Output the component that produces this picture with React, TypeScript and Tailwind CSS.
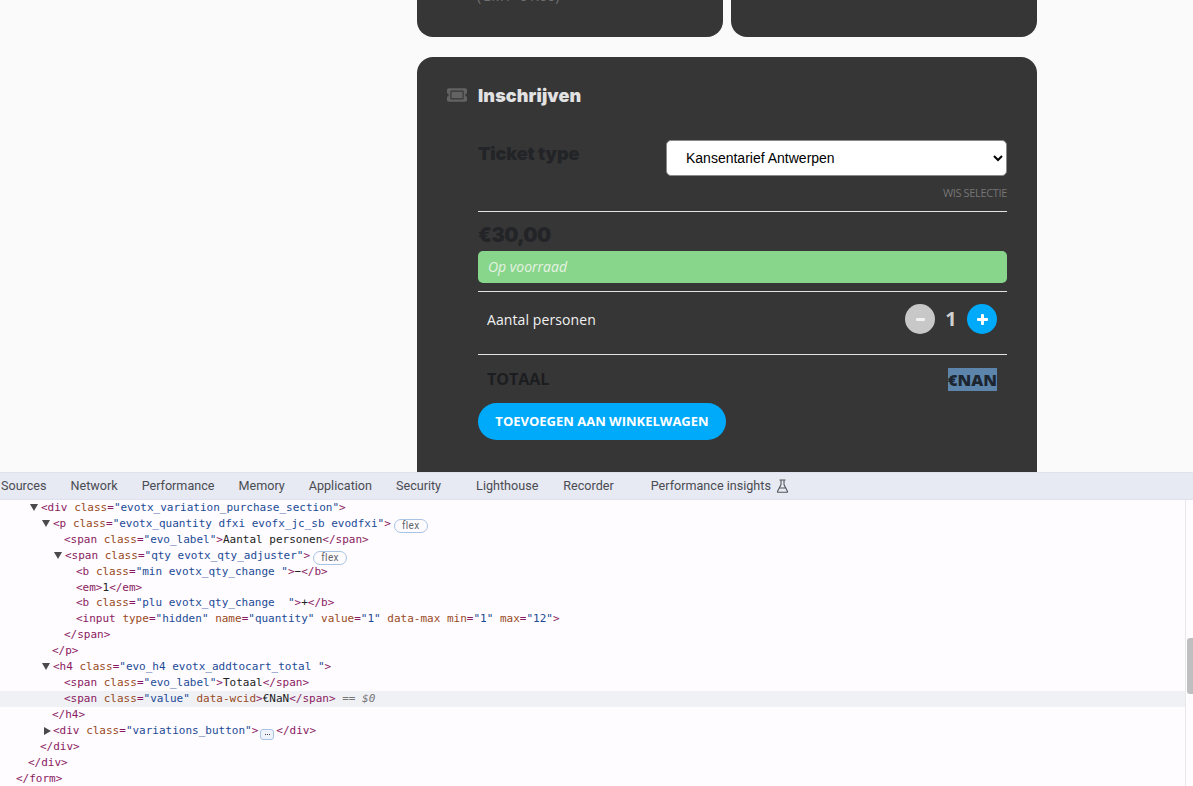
import { FaTicketAlt } from "react-icons/fa";

const heading = "font-['Inter',sans-serif]";
const body = "font-['Open_Sans',sans-serif]";

function T({ children }: { children: React.ReactNode }) {
  return <span className="text-[#8a1a60]">{children}</span>;
}
function A({ name, value }: { name: string; value: string }) {
  return (
    <>
      {" "}
      <span className="text-[#994a1e]">{name}</span>
      <T>=</T>
      <span className="text-[#1c4a96]">"{value}"</span>
    </>
  );
}
function Flex() {
  return (
    <span className="ml-[3px] inline-flex h-[14px] w-[34px] items-center justify-center rounded-full border border-[#a8c3e4] align-[-2px] font-['Roboto',sans-serif] text-[10px] leading-none tracking-[0.4px] text-[#5f6368]">
      flex
    </span>
  );
}
function Row({
  indent,
  arrow,
  selected,
  short,
  children,
}: {
  indent: number;
  arrow?: "open" | "closed";
  selected?: boolean;
  short?: boolean;
  children: React.ReactNode;
}) {
  return (
    <div
      className={`relative whitespace-pre ${short ? "h-[15px] leading-[15px]" : "h-4 leading-4"} ${selected ? "bg-[#eff1f5]" : ""}`}
      style={{ paddingLeft: indent }}
    >
      {arrow === "open" && (
        <span className="absolute top-[4px] h-0 w-0 border-x-[4px] border-t-[7px] border-x-transparent border-t-[#4a4a4a]" style={{ left: indent - 11 }} />
      )}
      {arrow === "closed" && (
        <span className="absolute top-[4px] h-0 w-0 border-y-[4px] border-l-[7px] border-y-transparent border-l-[#4a4a4a]" style={{ left: indent - 9 }} />
      )}
      {children}
    </div>
  );
}

function Divider() {
  return <div className="h-px bg-[#e4e4e4]" />;
}

const tabs = [
  { label: "Sources", cls: "" },
  { label: "Network", cls: "" },
  { label: "Performance", cls: "" },
  { label: "Memory", cls: "" },
  { label: "Application", cls: "" },
  { label: "Security", cls: "" },
  { label: "Lighthouse", cls: "ml-[11px]" },
  { label: "Recorder", cls: "ml-px" },
];

export default function App() {
  return (
    <div className="flex h-[786px] w-[1193px] flex-col overflow-hidden bg-[#fafafa]">
      <div className="h-[472px] shrink-0 overflow-hidden pl-[417px]">
        <div className="w-[620px]">
          <div className="flex gap-2">
            <div className={`h-[37px] w-[306px] overflow-hidden rounded-b-[16px] bg-[#363636] pl-[60px] ${body}`}>
              <div className="-mt-[13px] text-[14px] leading-[18px] text-[#6f6f6f]">(GMT+01:00)</div>
            </div>
            <div className="h-[37px] w-[306px] rounded-b-[16px] bg-[#363636]" />
          </div>

          <section className="mt-5 h-[430px] rounded-t-[16px] bg-[#363636] pr-[30px] pl-[30px] pt-[26px]">
            <div className="flex h-6 items-center">
              <FaTicketAlt className="h-[20px] w-[20px] text-[#636363]" />
              <h2 className={`ml-[11px] text-[18px] font-black tracking-[0.1px] text-[#e2e2e2] ${heading}`}>Inschrijven</h2>
            </div>

            <div className="ml-[31px]">
              <div className="mt-[33px] flex justify-between">
                <span className={`mt-[2px] text-[18px] leading-6 font-black tracking-[-0.1px] text-[#232427] ${heading}`}>Ticket type</span>
                <select
                  defaultValue="Kansentarief Antwerpen"
                  className="h-9 w-[341px] rounded-[5px] border border-[#8a8a8a] bg-white pl-[15px] font-['Liberation_Sans',sans-serif] text-[14px] text-black"
                >
                  <option>Kansentarief Antwerpen</option>
                </select>
              </div>
              <div className={`mt-[10px] text-right text-[11px] leading-[14px] tracking-[-0.35px] text-[#757575] ${body}`}>WIS SELECTIE</div>
              <div className="mt-[11px]"><Divider /></div>

              <div className={`mt-[10px] h-[26px] text-[20px] leading-[26px] font-black tracking-[-0.6px] text-[#232427] ${heading}`}>€30,00</div>
              <div className={`mt-[3px] h-8 rounded-[5px] bg-[#88d68b] pl-[10px] text-[14px] leading-[31px] text-[#e6f2e2] italic ${body}`}>Op voorraad</div>
              <div className="mt-2"><Divider /></div>

              <div className={`flex items-start justify-between pt-3 pr-[10px] pb-5 pl-[9px] ${body}`}>
                <span className="mt-[6px] text-[14px] leading-5 tracking-[0.1px] text-[#f1f1f1]">Aantal personen</span>
                <span className="flex h-[30px] items-center">
                  <b className="flex h-[30px] w-[30px] items-center justify-center rounded-full bg-[#c8c8c8] text-[#fafafa]">
                    <span className="h-[3px] w-[9px] rounded-[1px] bg-[#f2f2f2]" />
                  </b>
                  <em className="w-8 text-center text-[20px] font-bold text-[#cfcfcf] not-italic">1</em>
                  <b className="relative flex h-[30px] w-[30px] items-center justify-center rounded-full bg-[#00aafb]">
                    <span className="h-[3px] w-[11px] rounded-[1px] bg-white" />
                    <span className="absolute h-[11px] w-[3px] rounded-[1px] bg-white" />
                  </b>
                </span>
              </div>
              <Divider />

              <div className={`flex justify-between pt-[13px] pr-[10px] pl-[9px] text-[16px] leading-[23px] font-bold text-[#1c1d20] ${body}`}>
                <span>TOTAAL</span>
                <span className="bg-[#5d85ac] text-[16.5px] font-extrabold text-[#1c2530]">€NAN</span>
              </div>
              <button className={`mt-3 flex h-[37px] w-[248px] items-center justify-center rounded-full bg-[#00aafb] pt-px text-[13px] font-bold text-white ${body}`}>
                TOEVOEGEN AAN WINKELWAGEN
              </button>
            </div>
          </section>
        </div>
      </div>

      <div className="flex h-[28px] shrink-0 items-center gap-[24px] border-t border-b border-[#dfe1ee] bg-[#e7e9f3] pl-px font-['Roboto',sans-serif] text-[12.6px] text-[#4a4c52]">
        {tabs.map((t) => (
          <span key={t.label} className={t.cls}>{t.label}</span>
        ))}
        <span className="ml-[13px] flex items-center gap-[5px]">
          Performance insights
          <svg width="13" height="14" viewBox="0 0 13 14" fill="none" stroke="#55575c" strokeWidth="1.1">
            <path d="M3.5 1h6M5 1v4.5L1.5 12.5q-.2.8.6.8h8.8q.8 0 .6-.8L8 5.5V1M3.5 9h6" />
          </svg>
        </span>
      </div>

      <div className="flex min-h-0 flex-1 bg-[#fefcff]">
        <div className="min-w-0 flex-1 font-['DejaVu_Sans_Mono',monospace] text-[11px] text-[#222]">
          <Row indent={41} arrow="open"><T>&lt;div</T><A name="class" value="evotx_variation_purchase_section" /><T>&gt;</T></Row>
          <Row indent={53} arrow="open"><T>&lt;p</T><A name="class" value="evotx_quantity dfxi evofx_jc_sb evodfxi" /><T>&gt;</T><Flex /></Row>
          <Row indent={64}><T>&lt;span</T><A name="class" value="evo_label" /><T>&gt;</T>Aantal personen<T>&lt;/span&gt;</T></Row>
          <Row indent={65} arrow="open"><T>&lt;span</T><A name="class" value="qty evotx_qty_adjuster" /><T>&gt;</T><Flex /></Row>
          <Row indent={76}><T>&lt;b</T><A name="class" value="min evotx_qty_change " /><T>&gt;</T>−<T>&lt;/b&gt;</T></Row>
          <Row indent={76} short><T>&lt;em&gt;</T>1<T>&lt;/em&gt;</T></Row>
          <Row indent={76}><T>&lt;b</T><A name="class" value="plu evotx_qty_change  " /><T>&gt;</T>+<T>&lt;/b&gt;</T></Row>
          <Row indent={76}>
            <T>&lt;input</T><A name="type" value="hidden" /><A name="name" value="quantity" /><A name="value" value="1" />
            {" "}<span className="text-[#994a1e]">data-max</span><A name="min" value="1" /><A name="max" value="12" /><T>&gt;</T>
          </Row>
          <Row indent={64}><T>&lt;/span&gt;</T></Row>
          <Row indent={52}><T>&lt;/p&gt;</T></Row>
          <Row indent={53} arrow="open"><T>&lt;h4</T><A name="class" value="evo_h4 evotx_addtocart_total " /><T>&gt;</T></Row>
          <Row indent={64}><T>&lt;span</T><A name="class" value="evo_label" /><T>&gt;</T>Totaal<T>&lt;/span&gt;</T></Row>
          <Row indent={64} selected>
            <T>&lt;span</T><A name="class" value="value" />{" "}<span className="text-[#994a1e]">data-wcid</span><T>&gt;</T>€NaN<T>&lt;/span&gt;</T>
            <span className="text-[#777]"> == <em>$0</em></span>
          </Row>
          <Row indent={52}><T>&lt;/h4&gt;</T></Row>
          <Row indent={53} arrow="closed">
            <T>&lt;div</T><A name="class" value="variations_button" /><T>&gt;</T>
            <span className="mx-[2px] inline-flex h-[11px] w-[14px] items-center justify-center gap-px rounded-[3px] border border-[#a8c3e4] bg-[#eef2fa] align-[-1px]">
              <span className="h-px w-px bg-[#444]" />
              <span className="h-px w-px bg-[#444]" />
              <span className="h-px w-px bg-[#444]" />
            </span>
            <T>&lt;/div&gt;</T>
          </Row>
          <Row indent={40}><T>&lt;/div&gt;</T></Row>
          <Row indent={28}><T>&lt;/div&gt;</T></Row>
          <Row indent={16}><T>&lt;/form&gt;</T></Row>
        </div>
        <div className="w-2 shrink-0 border-l border-[#e8e8ec] pl-[1px]">
          <div className="mt-[138px] h-14 rounded-l-[3px] bg-[#bfbfc1]" />
        </div>
      </div>
    </div>
  );
}
